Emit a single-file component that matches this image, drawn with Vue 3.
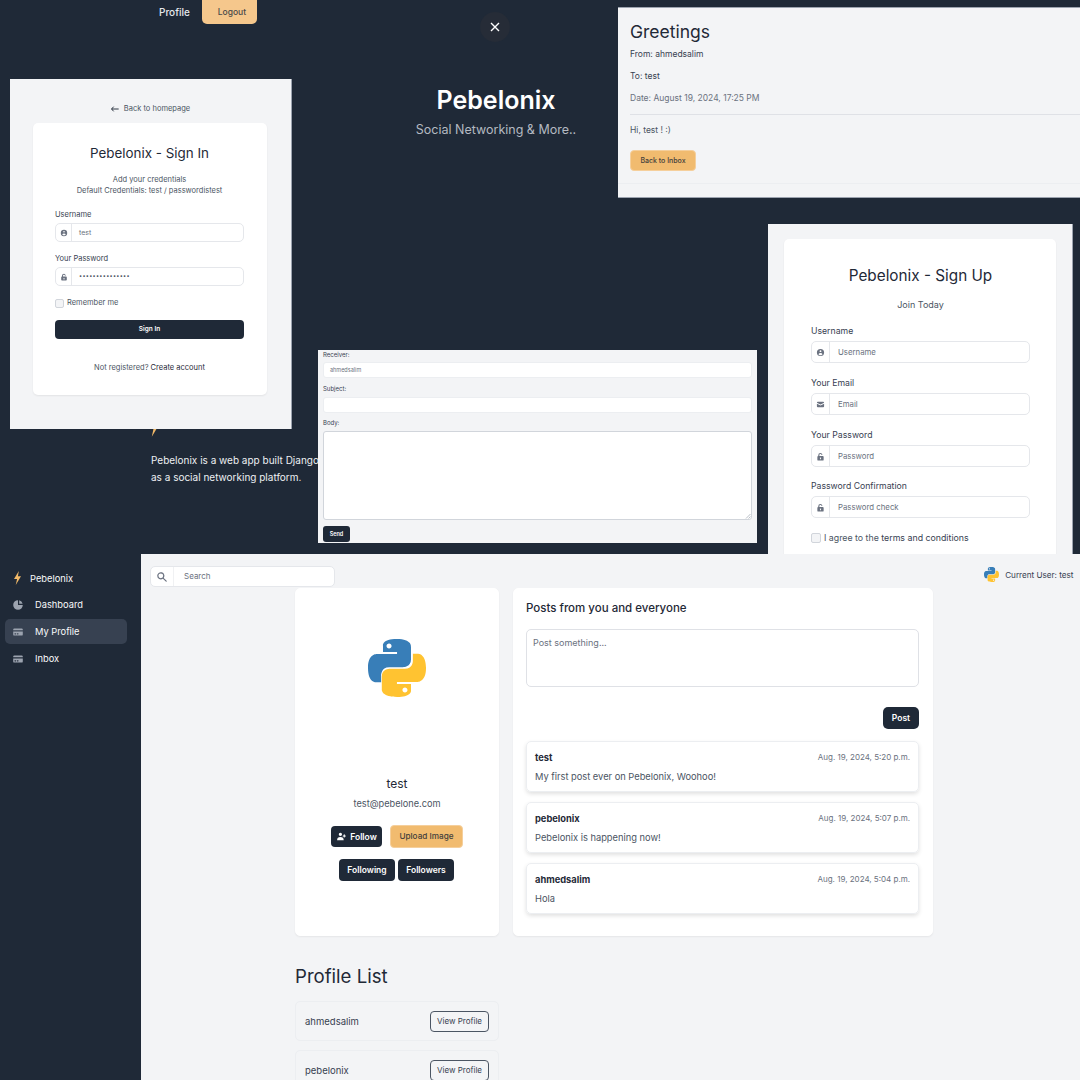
<template>
  <div class="canvas">
    <div class="topnav">
      <span class="topnav__link">Profile</span>
      <span class="topnav__logout">Logout</span>
    </div>

    <button class="close-btn" type="button" aria-label="close">
      <svg viewBox="0 0 12 12" width="12" height="12"><path d="M2 2l8 8M10 2l-8 8" stroke="#fff" stroke-width="1.4" fill="none" /></svg>
    </button>

    <div class="hero">
      <h1>Pebelonix</h1>
      <p>Social Networking &amp; More..</p>
    </div>

    <svg class="hero-bolt" viewBox="0 0 10 16" width="16" height="26"><path :d="icons.bolt" fill="#f2b968" /></svg>
    <div class="about">
      <p>Pebelonix is a web app built Django</p>
      <p>as a social networking platform.</p>
    </div>

    <!-- sign in window -->
    <section class="win win-signin">
      <div class="back-link">
        <svg viewBox="0 0 12 8" width="8" height="6"><path d="M4 0.5L0.8 4 4 7.5M1 4h10.5" stroke="#1f2937" stroke-width="1.4" fill="none" /></svg>
        <span>Back to homepage</span>
      </div>
      <div class="auth-card auth-card--in">
        <h2>Pebelonix - Sign In</h2>
        <p class="auth-sub">Add your credentials</p>
        <p class="auth-sub auth-sub--tight">Default Credentials: test / passwordistest</p>
        <label class="field-label first">Username</label>
        <div class="input-group">
          <span class="input-group__icon"><svg viewBox="0 0 20 20"><path :d="icons.user" fill-rule="evenodd" /></svg></span>
          <span class="input-group__value">test</span>
        </div>
        <label class="field-label">Your Password</label>
        <div class="input-group">
          <span class="input-group__icon"><svg viewBox="0 0 20 20"><path :d="icons.lock" fill-rule="evenodd" /></svg></span>
          <span class="input-group__value dots">•••••••••••••••</span>
        </div>
        <div class="check-row">
          <span class="check"></span>
          <span>Remember me</span>
        </div>
        <div class="signin-btn">Sign In</div>
        <p class="auth-foot">Not registered? <span>Create account</span></p>
      </div>
    </section>

    <!-- message window -->
    <section class="win win-message">
      <h2>Greetings</h2>
      <p class="meta strong">From: ahmedsalim</p>
      <p class="meta strong">To: test</p>
      <p class="meta">Date: August 19, 2024, 17:25 PM</p>
      <div class="message-rule"></div>
      <p class="message-body">Hi, test ! :)</p>
      <div class="amber-btn back-btn">Back to Inbox</div>
      <div class="message-rule message-rule--faint"></div>
    </section>

    <!-- sign up window -->
    <section class="win win-signup">
      <div class="auth-card auth-card--up">
        <h2>Pebelonix - Sign Up</h2>
        <p class="auth-sub">Join Today</p>
        <div v-for="field in signupFields" :key="field.label" class="signup-field">
          <label class="field-label">{{ field.label }}</label>
          <div class="input-group">
            <span class="input-group__icon"><svg viewBox="0 0 20 20"><path :d="field.icon" fill-rule="evenodd" /></svg></span>
            <span class="input-group__value placeholder">{{ field.placeholder }}</span>
          </div>
        </div>
        <div class="check-row">
          <span class="check"></span>
          <span>I agree to the <b>terms and conditions</b></span>
        </div>
      </div>
    </section>

    <!-- compose window -->
    <section class="win win-compose">
      <label class="compose-label compose-label--cut">Receiver:</label>
      <div class="compose-input compose-input--first">ahmedsalim</div>
      <label class="compose-label">Subject:</label>
      <div class="compose-input"></div>
      <label class="compose-label">Body:</label>
      <div class="compose-area">
        <svg class="compose-area__grip" viewBox="0 0 6 6" width="6" height="6"><path d="M5.5 1L1 5.5M5.5 3.5L3.5 5.5" stroke="#9ca3af" stroke-width="0.7" fill="none" /></svg>
      </div>
      <div class="send-btn">Send</div>
    </section>

    <!-- dashboard window -->
    <section class="win win-app">
      <aside class="sidebar">
        <div class="sidebar__brand">
          <svg viewBox="0 0 10 16" width="9" height="14"><path :d="icons.bolt" fill="#f2b968" /></svg>
          <span>Pebelonix</span>
        </div>
        <div
          v-for="item in navItems"
          :key="item.label"
          class="sidebar__item"
          :class="{ active: item.active }"
        >
          <svg viewBox="0 0 20 20" width="12" height="12"><path :d="item.icon" fill-rule="evenodd" /></svg>
          <span>{{ item.label }}</span>
        </div>
      </aside>

      <main class="main">
        <div class="topbar">
          <div class="search">
            <span class="search__icon"><svg viewBox="0 0 20 20" width="12" height="12"><path :d="icons.search" fill-rule="evenodd" /></svg></span>
            <span class="search__text">Search</span>
          </div>
          <div class="current-user">
            <svg viewBox="0 0 24 24" width="15" height="15"><path :d="icons.pyBlue" fill="#387eb8" /><path :d="icons.pyYellow" fill="#ffc331" /></svg>
            <span>Current User: test</span>
          </div>
        </div>

        <div class="content">
          <div class="profile-card">
            <svg class="profile-card__logo" viewBox="0 0 24 24" width="58" height="58"><path :d="icons.pyBlue" fill="#387eb8" /><path :d="icons.pyYellow" fill="#ffc331" /></svg>
            <div class="profile-card__name">test</div>
            <div class="profile-card__mail">test@pebelone.com</div>
            <div class="profile-card__row">
              <div class="dark-btn follow">
                <svg viewBox="0 0 20 20" width="11" height="11"><path :d="icons.userAdd" fill="#fff" /></svg>
                Follow
              </div>
              <div class="amber-btn upload">Upload Image</div>
            </div>
            <div class="profile-card__row second">
              <div class="dark-btn wide">Following</div>
              <div class="dark-btn wide">Followers</div>
            </div>
          </div>

          <div class="posts-card">
            <h3>Posts from you and everyone</h3>
            <div class="post-input">Post something...</div>
            <div class="post-actions"><div class="dark-btn post-btn">Post</div></div>
            <article v-for="post in posts" :key="post.author" class="post">
              <div class="post__head">
                <strong>{{ post.author }}</strong>
                <span>{{ post.time }}</span>
              </div>
              <p>{{ post.body }}</p>
            </article>
          </div>
        </div>

        <h2 class="list-title">Profile List</h2>
        <div class="profile-row" v-for="name in profiles" :key="name">
          <span>{{ name }}</span>
          <div class="view-btn">View Profile</div>
        </div>
      </main>
    </section>
  </div>
</template>

<script setup>
const icons = {
  bolt: 'M6.5 0L1 9h3.5L3 16l6-10H5.5z',
  user: 'M18 10a8 8 0 11-16 0 8 8 0 0116 0zm-6-3a2 2 0 11-4 0 2 2 0 014 0zm-2 4a5 5 0 00-4.546 2.916A5.986 5.986 0 0010 16a5.986 5.986 0 004.546-2.084A5 5 0 0010 11z',
  lock: 'M10 2a5 5 0 00-5 5v2a2 2 0 00-2 2v6a2 2 0 002 2h10a2 2 0 002-2v-6a2 2 0 00-2-2H7.5V7a2.5 2.5 0 014.8-1 1 1 0 001.9-.6A4.6 4.6 0 0010 2zM10 12a1.5 1.5 0 00-1 2.6V16h2v-1.4A1.5 1.5 0 0010 12z',
  mail: 'M2.003 5.884L10 9.882l7.997-3.998A2 2 0 0016 4H4a2 2 0 00-1.997 1.884zM18 8.118l-8 4-8-4V14a2 2 0 002 2h12a2 2 0 002-2V8.118z',
  search: 'M8 4a4 4 0 100 8 4 4 0 000-8zM2 8a6 6 0 1110.89 3.476l4.817 4.817a1 1 0 01-1.414 1.414l-4.816-4.816A6 6 0 012 8z',
  pie: 'M2 10a8 8 0 018-8v8h8a8 8 0 11-16 0zM12 2.252A8.014 8.014 0 0117.748 8H12V2.252z',
  card: 'M4 4a2 2 0 00-2 2v1h16V6a2 2 0 00-2-2H4zM18 9H2v5a2 2 0 002 2h12a2 2 0 002-2V9zM4 13a1 1 0 011-1h1a1 1 0 110 2H5a1 1 0 01-1-1zm5-1a1 1 0 100 2h1a1 1 0 100-2H9z',
  userAdd: 'M8 9a3 3 0 100-6 3 3 0 000 6zM8 11a6 6 0 016 6H2a6 6 0 016-6zM16 7a1 1 0 10-2 0v1h-1a1 1 0 100 2h1v1a1 1 0 102 0v-1h1a1 1 0 100-2h-1V7z',
  pyBlue: 'M11.914 0C5.82 0 6.2 2.656 6.2 2.656l.007 2.752h5.814v.826H3.9S0 5.789 0 11.969c0 6.18 3.403 5.96 3.403 5.96h2.03v-2.867s-.109-3.42 3.35-3.42h5.766s3.24.052 3.24-3.148V3.202S18.28 0 11.913 0zM8.708 1.85c.578 0 1.046.47 1.046 1.052 0 .581-.468 1.051-1.046 1.051-.579 0-1.046-.47-1.046-1.051 0-.582.467-1.052 1.046-1.052z',
  pyYellow: 'M12.087 24c6.092 0 5.712-2.656 5.712-2.656l-.007-2.752h-5.814v-.826h8.123s3.9.445 3.9-5.735c0-6.18-3.404-5.96-3.404-5.96h-2.03v2.867s.109 3.42-3.35 3.42H8.95s-3.24-.052-3.24 3.148v5.292S5.22 24 12.087 24zm3.206-1.85c-.579 0-1.046-.47-1.046-1.052 0-.581.467-1.051 1.046-1.051.578 0 1.046.47 1.046 1.051 0 .582-.468 1.052-1.046 1.052z'
}

const signupFields = [
  { label: 'Username', placeholder: 'Username', icon: icons.user },
  { label: 'Your Email', placeholder: 'Email', icon: icons.mail },
  { label: 'Your Password', placeholder: 'Password', icon: icons.lock },
  { label: 'Password Confirmation', placeholder: 'Password check', icon: icons.lock }
]

const navItems = [
  { label: 'Dashboard', icon: icons.pie },
  { label: 'My Profile', icon: icons.card, active: true },
  { label: 'Inbox', icon: icons.card }
]

const posts = [
  { author: 'test', time: 'Aug. 19, 2024, 5:20 p.m.', body: 'My first post ever on Pebelonix, Woohoo!' },
  { author: 'pebelonix', time: 'Aug. 19, 2024, 5:07 p.m.', body: 'Pebelonix is happening now!' },
  { author: 'ahmedsalim', time: 'Aug. 19, 2024, 5:04 p.m.', body: 'Hola' }
]

const profiles = ['ahmedsalim', 'pebelonix']
</script>

<style>
html,
body {
  margin: 0;
  background: #1f2937;
}
</style>

<style scoped>
.canvas {
  position: relative;
  width: 1080px;
  height: 1080px;
  overflow: hidden;
  background: #1f2937;
  color: #1f2937;
  font-family: Inter, "Liberation Sans", sans-serif;
}

h1,
h2,
h3,
p {
  margin: 0;
  font-weight: 400;
}

.win {
  position: absolute;
  box-sizing: border-box;
  background: #f3f4f6;
}

/* top bits on the dark background */
.topnav {
  position: absolute;
  left: 159px;
  top: 0;
  display: flex;
  gap: 12px;
  color: #e5e7eb;
  font-size: 10px;
  font-weight: 500;
}

.topnav__link {
  line-height: 24px;
}

.topnav__logout {
  box-sizing: border-box;
  width: 55px;
  height: 24px;
  padding-left: 5px;
  border-radius: 0 0 5px 5px;
  background: #f5c78c;
  color: #4b4a4a;
  font-size: 8.5px;
  line-height: 24px;
  text-align: center;
}

.close-btn {
  position: absolute;
  left: 480px;
  top: 12px;
  width: 30px;
  height: 30px;
  padding: 0;
  display: flex;
  align-items: center;
  justify-content: center;
  border: none;
  border-radius: 50%;
  background: #262c37;
}

.hero {
  position: absolute;
  left: 396px;
  top: 84px;
  width: 200px;
  text-align: center;
}

.hero h1 {
  color: #fff;
  font-size: 25px;
  line-height: 32px;
  font-weight: 600;
}

.hero p {
  margin-top: 6px;
  color: #b4b9c1;
  font-size: 12.5px;
  line-height: 16px;
}

.hero-bolt {
  position: absolute;
  left: 147px;
  top: 411px;
}

.about {
  position: absolute;
  left: 151px;
  top: 452px;
  color: #eef0f3;
  font-size: 10px;
  font-weight: 500;
  line-height: 17px;
  white-space: nowrap;
}

/* auth windows */
.win-signin {
  left: 10px;
  top: 79px;
  width: 282px;
  height: 350px;
  padding-top: 24px;
  border-right: 1px solid #9ca3af;
}

.back-link {
  display: flex;
  align-items: center;
  justify-content: center;
  gap: 5px;
  height: 11px;
  color: #4b5563;
  font-size: 7.5px;
  line-height: 11px;
}

.auth-card {
  box-sizing: border-box;
  border-radius: 5px;
  background: #fff;
  box-shadow: 0 1px 2px rgba(0, 0, 0, 0.07);
  text-align: center;
}

.auth-card h2 {
  color: #1f2937;
}

.auth-card--in {
  width: 234px;
  height: 272px;
  margin: 9px 0 0 23px;
  padding: 22px 23px 0 22px;
}

.auth-card--in h2 {
  font-size: 13.4px;
  line-height: 17px;
}

.auth-sub {
  margin-top: 12px;
  color: #4b5563;
  font-size: 7.5px;
  line-height: 11px;
}

.auth-sub--tight {
  margin-top: 0;
}

.field-label {
  display: block;
  margin: 11px 0 3px;
  color: #374151;
  font-size: 7.5px;
  line-height: 11px;
  text-align: left;
}

.field-label.first {
  margin-top: 13px;
}

.input-group {
  display: flex;
  align-items: stretch;
  box-sizing: border-box;
  height: 19px;
  border: 1px solid #e5e7eb;
  border-radius: 5px;
  background: #fff;
  text-align: left;
}

.input-group__icon {
  width: 15px;
  display: flex;
  align-items: center;
  justify-content: center;
  flex: none;
  border-right: 1px solid #e5e7eb;
}

.input-group__icon svg {
  width: 8px;
  height: 8px;
  fill: #6b7280;
}

.input-group__value {
  padding-left: 7px;
  color: #6b7280;
  font-size: 7px;
  line-height: 17px;
}

.dots {
  font-size: 5.5px;
  letter-spacing: 0.3px;
  color: #4b5563;
}

.check-row {
  display: flex;
  align-items: center;
  gap: 3px;
  color: #4b5563;
  font-size: 7.5px;
  line-height: 10px;
}

.auth-card--in .check-row {
  margin-top: 12px;
}

.check {
  box-sizing: border-box;
  width: 9px;
  height: 9px;
  border: 1px solid #d1d5db;
  border-radius: 2px;
  background: #f3f4f6;
}

.signin-btn {
  height: 19px;
  margin-top: 12px;
  border-radius: 4px;
  background: #1f2937;
  color: #fff;
  font-size: 6.5px;
  font-weight: 600;
  line-height: 19px;
}

.auth-foot {
  margin-top: 23px;
  color: #4b5563;
  font-size: 7.5px;
  line-height: 11px;
}

.auth-foot span {
  color: #1f2937;
}

.win-signup {
  left: 768px;
  top: 224px;
  width: 305px;
  height: 340px;
  padding: 15px 0 0 16px;
  border-right: 1px solid #9ca3af;
}

.auth-card--up {
  width: 272px;
  height: 340px;
  padding: 27px 26px 0 27px;
}

.auth-card--up h2 {
  font-size: 15.3px;
  line-height: 20px;
}

.auth-card--up .auth-sub {
  margin-top: 12px;
  font-size: 9px;
  line-height: 13px;
}

.auth-card--up .field-label {
  margin: 0 0 4px;
  font-size: 8.7px;
  line-height: 12px;
}

.signup-field {
  margin-top: 14px;
}

.signup-field:nth-of-type(4) {
  margin-top: 13px;
}

.auth-card--up .input-group {
  height: 22px;
  border-width: 1px;
}

.auth-card--up .input-group__icon {
  width: 17px;
}

.auth-card--up .input-group__icon svg {
  width: 9px;
  height: 9px;
}

.auth-card--up .input-group__value {
  padding-left: 8px;
  font-size: 7.8px;
  line-height: 20px;
}

.placeholder {
  color: #6b7280;
}

.auth-card--up .check-row {
  margin-top: 14px;
  gap: 3px;
  font-size: 8.8px;
  line-height: 12px;
}

.auth-card--up .check {
  width: 10px;
  height: 10px;
}

.check-row b {
  color: #374151;
  font-weight: 400;
}

/* message window */
.win-message {
  left: 618px;
  top: 7px;
  width: 462px;
  height: 191px;
  padding: 13px 0 0 12px;
  border-top: 1px solid #9ca3af;
  border-bottom: 1px solid #9ca3af;
}

.win-message h2 {
  font-size: 17.5px;
  line-height: 22px;
}

.meta {
  margin-top: 11px;
  color: #4b5563;
  font-size: 8.5px;
  line-height: 11px;
}

.meta.strong {
  color: #374151;
}

.win-message h2 + .meta {
  margin-top: 6px;
}

.meta:not(.strong) {
  color: #6b7280;
}

.message-rule {
  height: 1px;
  margin: 10px 0 0 0;
  background: #dfe1e6;
}

.message-rule--faint {
  margin: 12px 0 0 -12px;
  background: #eceef1;
}

.message-body {
  margin-top: 9px;
  color: #4b5563;
  font-size: 8.5px;
  line-height: 12px;
}

.amber-btn {
  box-sizing: border-box;
  border: 1px solid #f5cf9c;
  background: #f1bb6f;
  color: #44403c;
  text-align: center;
}

.back-btn {
  width: 66px;
  height: 21px;
  margin-top: 14px;
  border-radius: 4px;
  font-size: 7px;
  font-weight: 500;
  line-height: 19px;
}

/* compose window */
.win-compose {
  left: 318px;
  top: 350px;
  width: 439px;
  height: 193px;
  padding: 0 5px;
  overflow: hidden;
}

.compose-label {
  display: block;
  margin-top: 6px;
  color: #374151;
  font-size: 6px;
  line-height: 9px;
}

.compose-label--cut {
  margin-top: 0;
}

.compose-input {
  box-sizing: border-box;
  height: 16px;
  margin-top: 4px;
  padding-left: 6px;
  border: 1px solid #eceef1;
  border-radius: 3px;
  background: #fff;
  color: #6b7280;
  font-size: 5.5px;
  line-height: 14px;
}

.compose-input--first {
  margin-top: 3px;
}

.compose-input + .compose-label {
  margin-top: 6px;
}

.compose-input:not(.compose-input--first) + .compose-label {
  margin-top: 5px;
}

.compose-area {
  position: relative;
  box-sizing: border-box;
  height: 89px;
  margin-top: 4px;
  border: 1px solid #d1d5db;
  border-radius: 3px;
  background: #fff;
}

.compose-area__grip {
  position: absolute;
  right: 0;
  bottom: 0;
}

.send-btn {
  width: 27px;
  height: 16px;
  margin-top: 6px;
  border-radius: 3px;
  background: #1f2937;
  color: #fff;
  font-size: 5.5px;
  font-weight: 600;
  line-height: 16px;
  text-align: center;
}

/* dashboard window */
.win-app {
  left: 0;
  top: 554px;
  width: 1080px;
  height: 526px;
  display: flex;
  background: #1f2937;
}

.sidebar {
  width: 141px;
  flex: none;
  padding-top: 14px;
  color: #f9fafb;
  font-size: 9.3px;
  font-weight: 400;
}

.sidebar__brand {
  display: flex;
  align-items: center;
  height: 20px;
  padding-left: 13px;
  gap: 8px;
  margin-bottom: 4px;
}

.sidebar__item {
  display: flex;
  align-items: center;
  gap: 11px;
  box-sizing: border-box;
  width: 122px;
  height: 25px;
  margin: 2px 0 0 5px;
  padding-left: 7px;
  border-radius: 5px;
}

.sidebar__item svg {
  fill: #9ca3af;
  flex: none;
}

.sidebar__item.active {
  background: #374151;
}

.main {
  flex: 1;
  min-width: 0;
  padding: 12px 6px 0 9px;
  background: #f3f4f6;
}

.topbar {
  display: flex;
  align-items: flex-start;
  justify-content: space-between;
  height: 22px;
}

.search {
  display: flex;
  box-sizing: border-box;
  width: 185px;
  height: 21px;
  border: 1px solid #e5e7eb;
  border-radius: 5px;
  background: #fff;
}

.search__icon {
  display: flex;
  align-items: center;
  justify-content: center;
  width: 22px;
  border-right: 1px solid #f0f1f3;
}

.search__icon svg {
  fill: #6b7280;
}

.search__text {
  padding-left: 10px;
  color: #6b7280;
  font-size: 8px;
  line-height: 19px;
}

.current-user {
  display: flex;
  align-items: center;
  gap: 6px;
  margin: 1px 0 0 0;
  padding-right: 0.5px;
  color: #374151;
  font-size: 8.15px;
  font-weight: 400;
}

.content {
  display: grid;
  grid-template-columns: 204px 420px;
  gap: 14px;
  margin: 0 0 0 145px;
  padding-top: 0;
}

.profile-card,
.posts-card {
  box-sizing: border-box;
  height: 348px;
  border: 1px solid #fff;
  border-radius: 5px;
  background: #fff;
  box-shadow: 0 1px 2px rgba(0, 0, 0, 0.06);
}

.profile-card {
  display: flex;
  flex-direction: column;
  align-items: center;
  padding-top: 50px;
}

.profile-card__logo {
  flex: none;
}

.profile-card__name {
  margin-top: 79px;
  font-size: 12px;
  line-height: 16px;
}

.profile-card__mail {
  margin-top: 5px;
  color: #4b5563;
  font-size: 9.2px;
  line-height: 13px;
}

.profile-card__row {
  display: flex;
  align-items: center;
  gap: 8px;
  margin-top: 15px;
}

.profile-card__row.second {
  gap: 3px;
  margin-top: 11px;
  margin-right: 1px;
}

.dark-btn {
  display: flex;
  align-items: center;
  justify-content: center;
  border-radius: 4px;
  background: #1f2937;
  color: #fff;
  font-size: 8.5px;
  font-weight: 600;
}

.follow {
  width: 51px;
  height: 21px;
  gap: 3px;
}

.upload {
  width: 73px;
  height: 23px;
  border-radius: 4px;
  font-size: 8.2px;
  font-weight: 500;
  line-height: 21px;
}

.wide {
  width: 56px;
  height: 22px;
}

.posts-card {
  padding: 12px 13px 0 12px;
}

.posts-card h3 {
  font-size: 11.5px;
  font-weight: 500;
  line-height: 14px;
}

.post-input {
  box-sizing: border-box;
  height: 58px;
  margin-top: 14px;
  padding: 8px 6px;
  border: 1px solid #dfe1e6;
  border-radius: 5px;
  color: #6b7280;
  font-size: 9px;
  line-height: 10px;
}

.post-actions {
  display: flex;
  justify-content: flex-end;
  margin-top: 20px;
}

.post-btn {
  width: 36px;
  height: 22px;
  border-radius: 5px;
}

.post {
  box-sizing: border-box;
  height: 51px;
  margin-top: 10px;
  padding: 9px 8px 0;
  border: 1px solid #eceef1;
  border-radius: 5px;
  box-shadow: 0 2px 4px rgba(0, 0, 0, 0.12);
}

.post-actions + .post {
  margin-top: 12px;
}

.post__head {
  display: flex;
  justify-content: space-between;
  font-size: 9.3px;
  line-height: 13px;
}

.post__head span {
  color: #6b7280;
  font-size: 8px;
}

.post p {
  margin-top: 6px;
  color: #4b5563;
  font-size: 9.3px;
  line-height: 13px;
}

.list-title {
  margin: 28px 0 0 145px;
  font-size: 18.6px;
  line-height: 24px;
}

.profile-row {
  display: flex;
  align-items: center;
  justify-content: space-between;
  box-sizing: border-box;
  width: 204px;
  height: 40px;
  margin: 9px 0 0 145px;
  padding: 0 9px;
  border: 1px solid #eceef1;
  border-radius: 5px;
  color: #374151;
  font-size: 9.5px;
}

.list-title + .profile-row {
  margin-top: 13px;
}

.view-btn {
  box-sizing: border-box;
  width: 59px;
  height: 21px;
  border: 1px solid #4b5563;
  border-radius: 4px;
  font-size: 8px;
  line-height: 19px;
  text-align: center;
}
</style>
